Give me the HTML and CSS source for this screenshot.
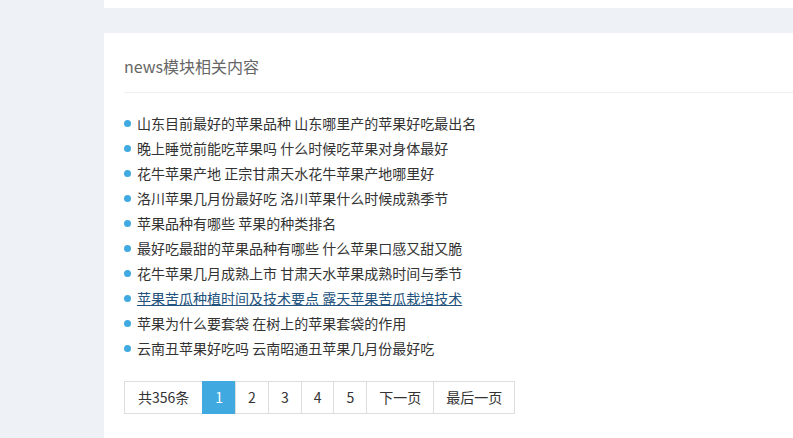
FILE: index.html
```html
<!DOCTYPE html>
<html lang="zh-CN">
<head>
    <meta charset="UTF-8">
    <meta name="viewport" content="width=device-width, initial-scale=1.0">
    <title>news模块相关内容</title>
    <link rel="stylesheet" href="styles.css">
</head>
<body>
    <div class="main">
        <div class="panel-top"></div>

        <div class="panel">
            <h3 class="panel-title">news模块相关内容</h3>

            <ul class="news-list">
                <li><a href="#">山东目前最好的苹果品种 山东哪里产的苹果好吃最出名</a></li>
                <li><a href="#">晚上睡觉前能吃苹果吗 什么时候吃苹果对身体最好</a></li>
                <li><a href="#">花牛苹果产地 正宗甘肃天水花牛苹果产地哪里好</a></li>
                <li><a href="#">洛川苹果几月份最好吃 洛川苹果什么时候成熟季节</a></li>
                <li><a href="#">苹果品种有哪些 苹果的种类排名</a></li>
                <li><a href="#">最好吃最甜的苹果品种有哪些 什么苹果口感又甜又脆</a></li>
                <li><a href="#">花牛苹果几月成熟上市 甘肃天水苹果成熟时间与季节</a></li>
                <li><a href="#" class="hover">苹果苦瓜种植时间及技术要点 露天苹果苦瓜栽培技术</a></li>
                <li><a href="#">苹果为什么要套袋 在树上的苹果套袋的作用</a></li>
                <li><a href="#">云南丑苹果好吃吗 云南昭通丑苹果几月份最好吃</a></li>
            </ul>

            <div class="pager">
                <span>共356条</span>
                <a href="#" class="active">1</a>
                <a href="#">2</a>
                <a href="#">3</a>
                <a href="#">4</a>
                <a href="#">5</a>
                <a href="#">下一页</a>
                <a href="#">最后一页</a>
            </div>
        </div>
    </div>
</body>
</html>
```

FILE: styles.css
```css
body { margin: 0; background: #eef1f6; font-family: "Microsoft YaHei", "Noto Sans CJK SC", sans-serif; color: #333; }
.main { margin-left: 104px; }
.panel-top { height: 8px; background: #fff; margin-bottom: 25px; }
.panel { background: #fff; padding: 0 0 24px 20px; }
.panel-title { margin: 0; padding: 21px 0 14px; font-size: 16px; line-height: 24px; font-weight: normal; color: #666; border-bottom: 1px solid #eee; }
.news-list { list-style: none; margin: 18px 0 0; padding: 0; }
.news-list li { display: flex; align-items: center; font-size: 14px; line-height: 25px; }
.news-list li::before { content: ""; width: 7px; height: 7px; border-radius: 50%; background: #3fa9e0; margin-right: 6px; }
.news-list a { color: #333; text-decoration: none; }
.news-list a.hover { color: #23527c; text-decoration: underline; }
.pager { display: flex; margin-top: 20px; font-size: 14px; }
.pager span, .pager a { display: block; padding: 0 12px; height: 31px; line-height: 31px; border: 1px solid #ddd; margin-left: -1px; color: #333; text-decoration: none; }
.pager span { margin-left: 0; padding: 0 13px; }
.pager a.active { background: #3fa9e0; border-color: #3fa9e0; color: #fff; }
```
